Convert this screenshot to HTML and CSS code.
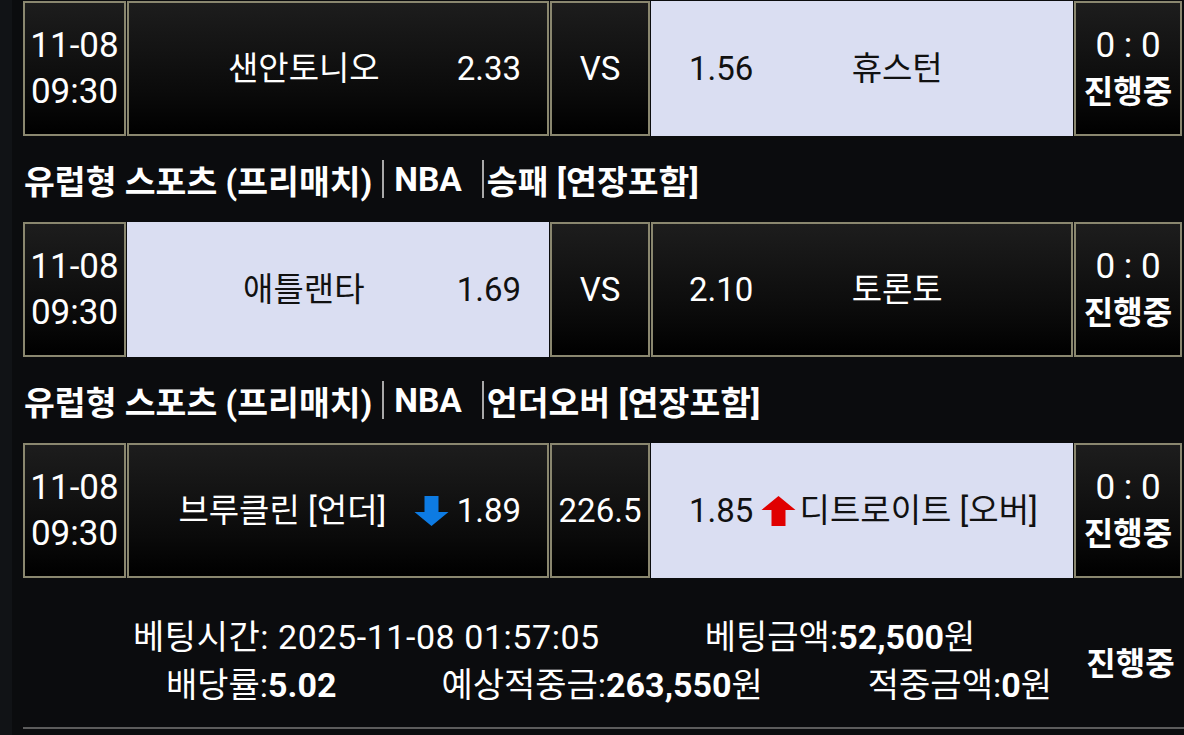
FILE: index.html
```html
<!DOCTYPE html>
<html lang="ko">
<head>
<meta charset="utf-8">
<link rel="stylesheet" href="styles.css">
</head>
<body>
<div class="page">
  <div class="match">
    <div class="cell date"><span>11-08</span><span>09:30</span></div>
    <div class="cell home"><span class="name">샌안토니오</span><span class="odds">2.33</span></div>
    <div class="cell vs">VS</div>
    <div class="cell away picked"><span class="odds">1.56</span><span class="name">휴스턴</span></div>
    <div class="cell status"><span class="score">0 : 0</span><span class="state">진행중</span></div>
  </div>

  <div class="title">유럽형 스포츠 (프리매치)<span class="bar"></span>NBA<span class="bar wide"></span>승패 [연장포함]</div>

  <div class="match">
    <div class="cell date"><span>11-08</span><span>09:30</span></div>
    <div class="cell home picked"><span class="name">애틀랜타</span><span class="odds">1.69</span></div>
    <div class="cell vs">VS</div>
    <div class="cell away"><span class="odds">2.10</span><span class="name">토론토</span></div>
    <div class="cell status"><span class="score">0 : 0</span><span class="state">진행중</span></div>
  </div>

  <div class="title">유럽형 스포츠 (프리매치)<span class="bar"></span>NBA<span class="bar wide"></span>언더오버 [연장포함]</div>

  <div class="match">
    <div class="cell date"><span>11-08</span><span>09:30</span></div>
    <div class="cell home"><span class="name">브루클린 [언더]</span><span class="odds"><svg class="arrow" viewBox="0 0 34 30"><polygon fill="#0d7be3" points="10,0 24,0 24,16 34,16 17,30 0,16 10,16"/></svg> 1.89</span></div>
    <div class="cell vs">226.5</div>
    <div class="cell away picked"><span class="odds">1.85 <svg class="arrow" viewBox="0 0 34 30"><polygon fill="#e00000" points="17,0 34,14 24,14 24,30 10,30 10,14 0,14"/></svg></span><span class="name">디트로이트 [오버]</span></div>
    <div class="cell status"><span class="score">0 : 0</span><span class="state">진행중</span></div>
  </div>

  <div class="summary">
    <div class="lines">
      <div class="line first"><span class="time">베팅시간: 2025-11-08 01:57:05</span><span>베팅금액:<b>52,500</b>원</span></div>
      <div class="line second"><span>배당률:<b>5.02</b></span><span>예상적중금:<b>263,550</b>원</span><span>적중금액:<b>0</b>원</span></div>
    </div>
    <div class="summary-state">진행중</div>
  </div>
  <div class="rule"></div>
</div>
</body>
</html>
```
FILE: styles.css
```css
html, body {
  margin: 0;
  padding: 0;
  background: #0b0c0e;
}
body {
  width: 1184px;
  height: 735px;
  overflow: hidden;
  font-family: Roboto, "Noto Sans CJK KR", sans-serif;
  color: #ffffff;
  border-left: 12px solid #111316;
  box-sizing: border-box;
}
.page {
  padding-left: 11px;
  padding-top: 1px;
}
.match {
  display: grid;
  grid-template-columns: 103px 422px 100px 422px 108px;
  column-gap: 1px;
  height: 135px;
}
.cell {
  box-sizing: border-box;
  border: 2px solid #8a876f;
  background: linear-gradient(to bottom, #1d1d1d 0%, #0a0a0a 70%, #000 100%);
  display: flex;
  align-items: center;
  font-size: 33px;
  line-height: 46px;
}
.cell.picked {
  background: #dadef2;
  border-color: #dadef2;
  color: #111;
}
.date, .status {
  flex-direction: column;
  justify-content: center;
}
.date, .score {
  font-size: 35px;
}
.vs {
  justify-content: center;
}
.home {
  padding: 0 26px 0 22px;
}
.away {
  padding: 0 30px 0 36px;
}
.name {
  flex: 1;
  text-align: center;
  white-space: nowrap;
}
.odds {
  display: flex;
  align-items: center;
  white-space: nowrap;
}
.arrow {
  width: 35px;
  height: 30px;
}
.home .arrow {
  margin-right: 8px;
}
.away .arrow {
  margin-left: 8px;
}
.state, .summary-state {
  font-weight: 700;
  font-size: 32px;
}
.title {
  height: 86px;
  display: flex;
  align-items: center;
  font-size: 33.5px;
  font-weight: 700;
  padding-left: 1px;
  white-space: nowrap;
}
.bar {
  display: inline-block;
  width: 2px;
  height: 38px;
  background: #a9a9a9;
  margin: 0 10px 0 10px;
}
.bar.wide {
  margin-left: 20px;
  margin-right: 3px;
}
.summary {
  height: 133px;
  padding-top: 16px;
  display: flex;
  align-items: center;
}
.lines {
  flex: 1;
  display: flex;
  flex-direction: column;
}
.line {
  display: flex;
  gap: 105px;
  font-size: 34px;
  line-height: 48px;
  white-space: nowrap;
}
.line .time {
  letter-spacing: 0.55px;
}
.line.first {
  padding-left: 110px;
}
.line.second {
  padding-left: 143px;
}
.summary-state {
  width: 107px;
  text-align: center;
}
.rule {
  height: 2px;
  background: #5c5c5c;
}
```
